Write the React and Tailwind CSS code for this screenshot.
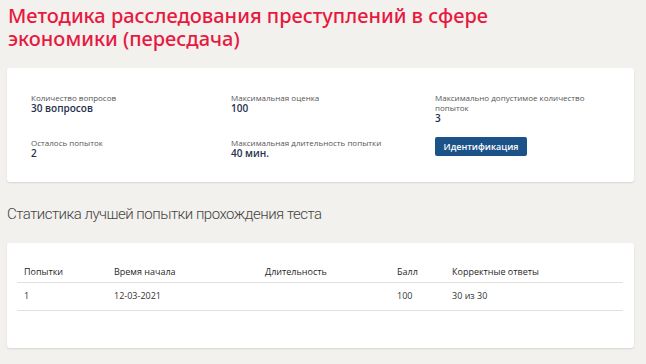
export default function App() {
  const font = { fontFamily: '"Open Sans", "Noto Sans", sans-serif' };
  return (
    <div className="w-[646px] h-[364px] bg-[#f2f1ee] overflow-hidden" style={font}>
      <div className="pl-[8px] pt-[4px]">
        <h1 className="text-[20px] leading-[23px] font-medium text-[#e8193f]" style={{ fontFamily: '"Noto Sans", sans-serif' }}>
          Методика расследования преступлений в сфере
          <br />
          экономики (пересдача)
        </h1>
      </div>
      <div className="ml-[7px] w-[627px] mt-[18px] bg-white rounded-[3px] shadow-[0_1px_2px_rgba(0,0,0,0.12)] pt-[25px] pb-[23px] pl-[24px]">
        <div className="grid grid-cols-[200px_204px_1fr] gap-y-[14px]">
          <Item label="Количество вопросов" value="30 вопросов" />
          <Item label="Максимальная оценка" value="100" />
          <Item label={<>Максимально допустимое количество<br />попыток</>} value="3" />
          <Item label="Осталось попыток" value="2" />
          <Item label="Максимальная длительность попытки" value="40 мин." />
          <div>
            <button className="-mt-[1px] block h-[19px] w-[92px] rounded-[2px] bg-[#1b5288] text-white text-[9px] font-semibold leading-[19px]">
              Идентификация
            </button>
          </div>
        </div>
      </div>
      <h2 className="pl-[7px] mt-[20px] text-[15px] leading-[24px] font-light tracking-[-0.5px] text-[#444]" style={{ fontFamily: 'Roboto, "Noto Sans", sans-serif' }}>
        Статистика лучшей попытки прохождения теста
      </h2>
      <div className="ml-[7px] w-[627px] mt-[17px] h-[105px] bg-white rounded-[3px] shadow-[0_1px_2px_rgba(0,0,0,0.12)] pt-[13px] pl-[10px] pr-[11px]">
        <table className="w-full text-[9px] text-[#333] border-collapse">
          <thead>
            <tr className="border-b border-[#e2e1de] h-[26px] text-left text-[#1f1f1f]">
              <th className="w-[97px] pl-[7px] pb-[3px] align-bottom font-medium">Попытки</th>
              <th className="w-[151px] pb-[3px] align-bottom font-medium">Время начала</th>
              <th className="w-[132px] pb-[3px] align-bottom font-medium">Длительность</th>
              <th className="w-[55px] pb-[3px] align-bottom font-medium">Балл</th>
              <th className="pb-[3px] align-bottom font-medium">Корректные ответы</th>
            </tr>
          </thead>
          <tbody>
            <tr className="border-b border-[#e2e1de] h-[28px]">
              <td className="pl-[7px]">1</td>
              <td>12-03-2021</td>
              <td></td>
              <td>100</td>
              <td>30 из 30</td>
            </tr>
          </tbody>
        </table>
      </div>
    </div>
  );
}

function Item({ label, value }) {
  return (
    <div>
      <div className="text-[8px] leading-[10px] text-[#555]">{label}</div>
      <div className="text-[10px] leading-[11px] font-semibold text-[#25304d]">{value}</div>
    </div>
  );
}
